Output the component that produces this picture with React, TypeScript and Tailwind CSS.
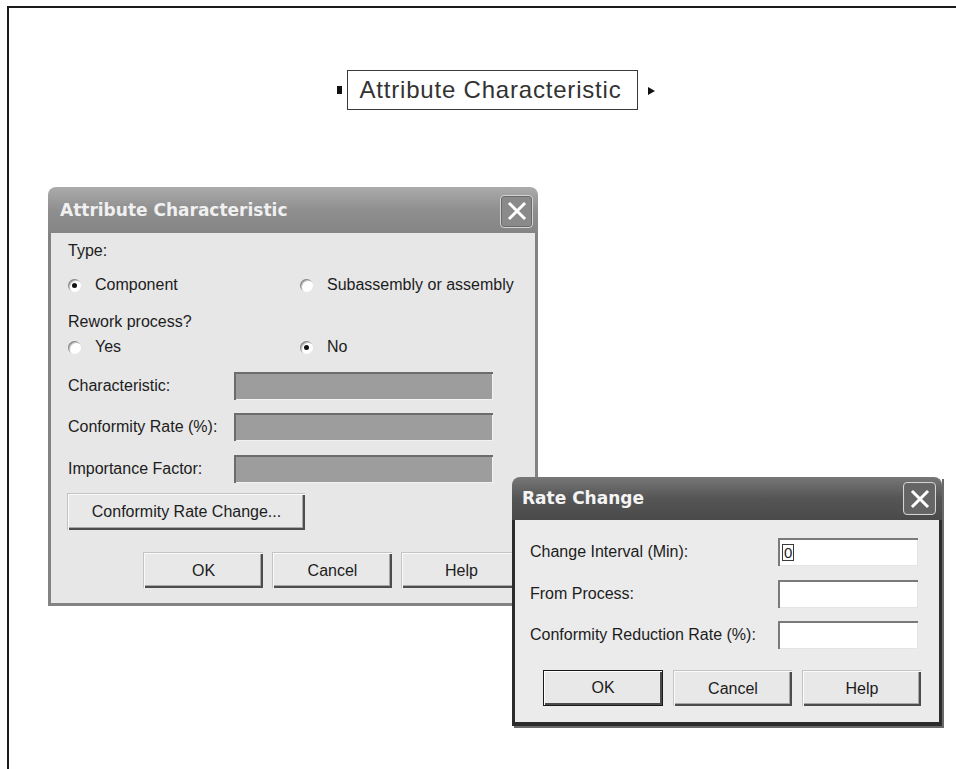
import React from "react";

const sans = "font-['Liberation_Sans',Arial,sans-serif]";
const titleFont = "font-['DejaVu_Sans','Liberation_Sans',sans-serif]";

function Radio({ checked }: { checked?: boolean }) {
  return (
    <span className="flex h-[13px] w-[13px] items-center justify-center rounded-full bg-white shadow-[inset_1px_1px_0_#8a8a8a,inset_2px_2px_0_#c8c8c8]">
      {checked && <span className="h-[5px] w-[5px] rounded-full bg-[#111]" />}
    </span>
  );
}

function RadioOption({ label, checked, width }: { label: string; checked?: boolean; width?: string }) {
  return (
    <div className={`flex items-center gap-[14px] ${width ?? ""}`}>
      <Radio checked={checked} />
      <span className="leading-[20px]">{label}</span>
    </div>
  );
}

function Button({
  children,
  className = "",
  isDefault,
}: {
  children: React.ReactNode;
  className?: string;
  isDefault?: boolean;
}) {
  return (
    <div
      className={`flex items-center justify-center bg-[#e8e8e8] text-[16px] text-[#1c1c1c] ${
        isDefault
          ? "border border-[#1a1a1a] shadow-[inset_1px_1px_0_#ffffff,inset_-2px_-2px_0_#4a4a4a]"
          : "border-t border-l border-[#c4c4c4] shadow-[inset_1px_1px_0_#fafafa,inset_-2px_-2px_0_#4d4d4d,inset_-3px_-3px_0_#a8a8a8]"
      } ${className}`}
    >
      {children}
    </div>
  );
}

function CloseButton({ tone }: { tone: "light" | "dark" }) {
  const bg = tone === "light" ? "bg-[#8a8a8a]" : "bg-[#656565]";
  return (
    <div className={`flex h-[33px] w-[33px] items-center justify-center rounded-[4px] border border-[#d4d4d4] ${bg} shadow-[inset_0_0_0_1px_#6a6a6a]`}>
      <svg width="22" height="22" viewBox="0 0 22 22">
        <path d="M4 4 L18 18 M18 4 L4 18" stroke="#ffffff" strokeWidth="3" strokeLinecap="square" />
      </svg>
    </div>
  );
}

function GrayField() {
  return (
    <div className="h-[28px] w-[259px] bg-[#9d9d9d] shadow-[inset_2px_2px_0_#6c6c6c,inset_-1px_-1px_0_#f2f2f2]" />
  );
}

function WhiteField({ children }: { children?: React.ReactNode }) {
  return (
    <div className="flex h-[28px] w-[140px] items-center bg-white pl-[4px] shadow-[inset_2px_2px_0_#7a7a7a,inset_-1px_-1px_0_#e4e4e4]">
      {children}
    </div>
  );
}

function AttributeDialog() {
  return (
    <div className={`absolute left-[48px] top-[187px] flex w-[490px] flex-col ${sans}`}>
      <div className="flex h-[46px] items-center justify-between rounded-t-[8px] bg-linear-to-b from-[#ababab] via-[#8f8f8f] to-[#858585] pl-[12px] pr-[5px] pt-[2px]">
        <span className={`${titleFont} text-[17px] font-bold text-[#f0f0f0]`}>Attribute Characteristic</span>
        <CloseButton tone="light" />
      </div>
      <div className="flex h-[373px] flex-col border-x-[3px] border-b-[3px] border-[#838383] bg-[#e7e7e7] pl-[17px] pt-[8px] text-[16px] text-[#1c1c1c]">
        <div className="leading-[20px]">Type:</div>
        <div className="mt-[14px] flex">
          <RadioOption label="Component" checked width="w-[232px]" />
          <RadioOption label="Subassembly or assembly" />
        </div>
        <div className="mt-[17px] leading-[20px]">Rework process?</div>
        <div className="mt-[5px] flex">
          <RadioOption label="Yes" width="w-[232px]" />
          <RadioOption label="No" checked />
        </div>
        <div className="mt-[15px] flex items-center">
          <span className="w-[166px]">Characteristic:</span>
          <GrayField />
        </div>
        <div className="mt-[13px] flex items-center">
          <span className="w-[166px]">Conformity Rate (%):</span>
          <GrayField />
        </div>
        <div className="mt-[14px] flex items-center">
          <span className="w-[166px]">Importance Factor:</span>
          <GrayField />
        </div>
        <Button className="-ml-[1px] mt-[10px] h-[37px] w-[238px]">Conformity Rate Change...</Button>
        <div className="ml-[75px] mt-[22px] flex gap-[9px]">
          <Button className="h-[36px] w-[120px]">OK</Button>
          <Button className="h-[36px] w-[120px]">Cancel</Button>
          <Button className="h-[36px] w-[120px]">Help</Button>
        </div>
      </div>
    </div>
  );
}

function RateChangeDialog() {
  return (
    <div className={`absolute left-[512px] top-[477px] flex w-[430px] flex-col ${sans} shadow-[2px_2px_0_#6a6a6a]`}>
      <div className="flex h-[43px] items-center justify-between rounded-t-[8px] bg-linear-to-b from-[#777777] via-[#555555] to-[#4a4a4a] pl-[10px] pr-[6px]">
        <span className={`${titleFont} text-[17px] font-bold text-[#f4f4f4]`}>Rate Change</span>
        <CloseButton tone="dark" />
      </div>
      <div className="flex h-[206px] flex-col border-x-[3px] border-b-[4px] border-[#2c2c2c] bg-[#ebebeb] pl-[15px] pt-[18px] text-[16px] text-[#1c1c1c]">
        <div className="flex items-center">
          <span className="w-[248px]">Change Interval (Min):</span>
          <WhiteField>
            <span className="border border-[#3a3a3a] px-[1px] text-[15px] leading-[15px]">0</span>
          </WhiteField>
        </div>
        <div className="mt-[14px] flex items-center">
          <span className="w-[248px]">From Process:</span>
          <WhiteField />
        </div>
        <div className="mt-[13px] flex items-center">
          <span className="w-[248px]">Conformity Reduction Rate (%):</span>
          <WhiteField />
        </div>
        <div className="ml-[13px] mt-[21px] flex gap-[10px]">
          <Button isDefault className="h-[36px] w-[120px]">OK</Button>
          <Button className="h-[36px] w-[119px]">Cancel</Button>
          <Button className="h-[36px] w-[119px]">Help</Button>
        </div>
      </div>
    </div>
  );
}

function DiagramNode() {
  return (
    <div className={`absolute left-[337px] top-[70px] flex items-center ${sans}`}>
      <span className="h-[8px] w-[5px] bg-[#111]" />
      <div className="ml-[5px] flex h-[40px] w-[291px] items-center justify-center border-[1.5px] border-[#3a3a3a] bg-white pr-[4px] text-[24px] tracking-[0.8px] text-[#333]">
        Attribute Characteristic
      </div>
      <svg className="ml-[10px] mt-[2px]" width="7" height="8" viewBox="0 0 7 8">
        <path d="M0 0 L7 4 L0 8 Z" fill="#111" />
      </svg>
    </div>
  );
}

export default function App() {
  return (
    <div className="relative h-[769px] w-[956px] overflow-hidden bg-white pl-[7px] pt-[6px]">
      <div className="h-full border-l-2 border-t-2 border-[#1b1b1b]" />
      <DiagramNode />
      <AttributeDialog />
      <RateChangeDialog />
    </div>
  );
}
